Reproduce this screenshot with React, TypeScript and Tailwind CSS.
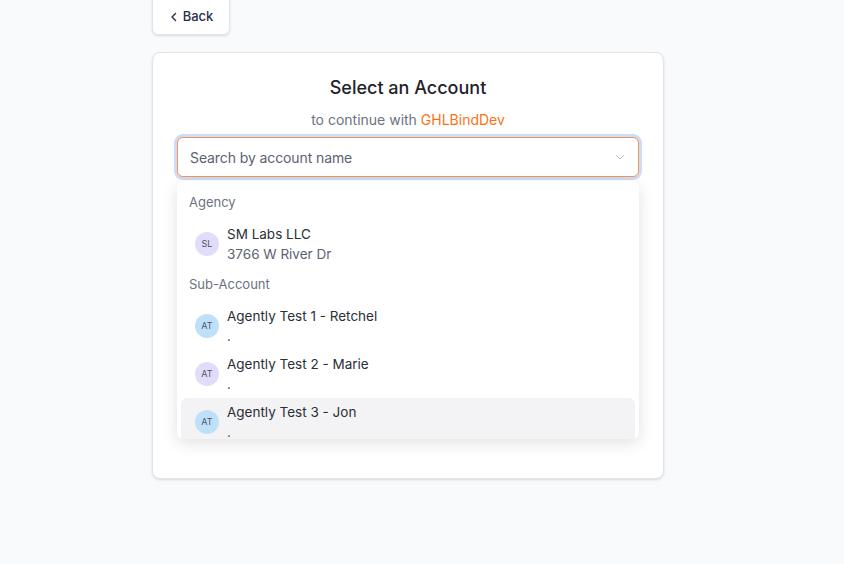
import React from "react";

function Avatar({ initials, color }: { initials: string; color: "purple" | "blue" }) {
  return (
    <div
      className={
        "flex h-6 w-6 shrink-0 items-center justify-center rounded-full text-[9px] text-gray-600 " +
        (color === "purple" ? "bg-[#e2dcfb]" : "bg-[#bfe0fb]")
      }
    >
      {initials}
    </div>
  );
}

function Item({
  initials,
  color,
  name,
  sub,
  active,
}: {
  initials: string;
  color: "purple" | "blue";
  name: string;
  sub: string;
  active?: boolean;
}) {
  return (
    <div
      className={
        "flex h-12 shrink-0 items-center gap-2 rounded-md pl-[14px] " + (active ? "bg-[#f3f3f5]" : "")
      }
    >
      <Avatar initials={initials} color={color} />
      <div className="flex flex-col">
        <span className="text-[13.5px] leading-5 text-[#2b2f36]">{name}</span>
        <span className="text-[13.5px] leading-5 text-[#5b6270]">{sub}</span>
      </div>
    </div>
  );
}

export default function App() {
  return (
    <div
      className="min-h-[564px] w-full bg-[#f9fafb] pl-[152px]"
      style={{ fontFamily: "Inter, 'Noto Sans', sans-serif" }}
    >
      <div className="flex w-[512px] flex-col">
        <div className="mt-[-6px] flex">
          <button className="flex h-[41px] w-[78px] items-center justify-center gap-1 rounded-md border border-[#e2e5ea] bg-white pt-[4px] text-[13px] font-medium text-[#27304a] shadow-sm">
            <svg width="10" height="10" viewBox="0 0 10 10" fill="none" stroke="currentColor" strokeWidth="1.4" strokeLinecap="round" strokeLinejoin="round">
              <path d="M6.5 1.5 3 5l3.5 3.5" />
            </svg>
            <span>Back</span>
          </button>
        </div>

        <div className="relative mt-[17px] flex h-[427px] flex-col rounded-lg border border-[#e3e5e9] bg-white px-6 shadow-sm">
          <h1 className="mt-[21px] text-center text-[18px] font-medium leading-7 text-[#1f2329]">
            Select an Account
          </h1>
          <p className="mt-[8px] text-center text-[14px] leading-5 text-[#6b7280]">
            to continue with <span className="text-[#f97316]">GHLBindDev</span>
          </p>

          <div className="relative mt-[7px]">
            <div className="flex h-10 items-center justify-between rounded-md border border-[#f59547] bg-white pl-3 pr-[12px] shadow-[0_0_0_3px_#cddcf8]">
              <span className="text-[14px] tracking-[-0.1px] text-[#5b6270]">Search by account name</span>
              <svg width="12" height="12" viewBox="0 0 12 12" fill="none" stroke="#b4b8bf" strokeWidth="1" strokeLinecap="round" strokeLinejoin="round">
                <path d="M2.5 4.5 6 8l3.5-3.5" />
              </svg>
            </div>

            <div className="absolute left-0 right-0 top-[44px] flex h-[258px] flex-col overflow-hidden rounded-md bg-white px-1 pt-[5px] shadow-[0_4px_16px_rgba(0,0,0,0.12)]">
              <div className="flex h-[34px] shrink-0 items-center pl-2 text-[13px] text-[#6b7280]">Agency</div>
              <Item initials="SL" color="purple" name="SM Labs LLC" sub="3766 W River Dr" />
              <div className="flex h-[34px] shrink-0 items-center pl-2 text-[13px] text-[#6b7280]">Sub-Account</div>
              <Item initials="AT" color="blue" name="Agently Test 1 - Retchel" sub="." />
              <Item initials="AT" color="purple" name="Agently Test 2 - Marie" sub="." />
              <Item initials="AT" color="blue" name="Agently Test 3 - Jon" sub="." active />
            </div>
          </div>
        </div>
      </div>
    </div>
  );
}
